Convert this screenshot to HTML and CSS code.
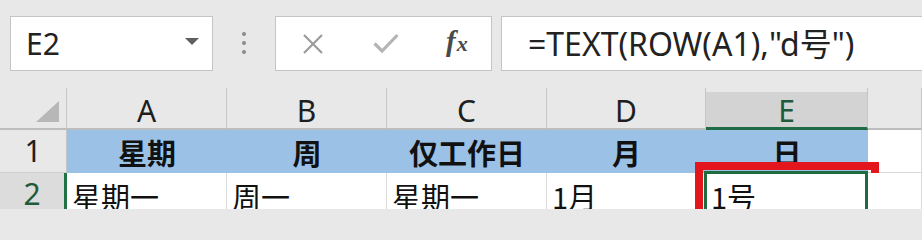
FILE: index.html
```html
<!DOCTYPE html>
<html lang="zh-CN">
<head>
<meta charset="utf-8">
<title>Excel</title>
<link rel="stylesheet" href="styles.css">
</head>
<body>
<div class="app">
  <div class="toolbar">
    <div class="namebox">
      <span class="name">E2</span>
      <svg class="dd" width="14" height="8" viewBox="0 0 14 8"><polygon points="0,0 14,0 7,7" fill="#5f5f5f"/></svg>
    </div>
    <div class="grip"><i></i><i></i><i></i></div>
    <div class="fxbtns">
      <svg class="btn-x" width="22" height="20" viewBox="0 0 22 20"><path d="M2 1 L20 19 M20 1 L2 19" stroke="#9c9c9c" stroke-width="2.2" fill="none"/></svg>
      <svg class="btn-ok" width="26" height="20" viewBox="0 0 26 20"><path d="M1.5 10.5 L9 18 L24.5 2" stroke="#b4b4b4" stroke-width="3.2" fill="none"/></svg>
      <span class="fx">f<span class="fx-x">x</span></span>
    </div>
    <div class="formula">=TEXT(ROW(A1),"d号")</div>
  </div>
  <div class="sheet">
    <div class="corner"><svg width="24" height="22" viewBox="0 0 24 22"><polygon points="23,0 23,21 0,21" fill="#b7b7b7"/></svg></div>
    <div class="colhdr">A</div>
    <div class="colhdr">B</div>
    <div class="colhdr">C</div>
    <div class="colhdr">D</div>
    <div class="colhdr sel">E</div>
    <div class="colhdr"></div>

    <div class="rowhdr">1</div>
    <div class="cell title">星期</div>
    <div class="cell title">周</div>
    <div class="cell title">仅工作日</div>
    <div class="cell title">月</div>
    <div class="cell title">日</div>
    <div class="cell blank"></div>

    <div class="rowhdr sel">2</div>
    <div class="cell data">星期一</div>
    <div class="cell data">周一</div>
    <div class="cell data">星期一</div>
    <div class="cell data">1月</div>
    <div class="cell data active">1号<span class="selbox"></span><span class="mark"></span></div>
    <div class="cell data"></div>
  </div>
</div>
</body>
</html>
```

FILE: styles.css
```css
* { box-sizing: border-box; }
html, body { margin: 0; padding: 0; background: #e8e8e8; }
.app {
  width: 922px;
  height: 209px;
  overflow: hidden;
  background: #e8e8e8;
  font-family: "Noto Sans", "Noto Sans CJK SC", sans-serif;
  color: #1b1b1b;
}
.toolbar {
  height: 88px;
  padding: 16px 0 0 10px;
  display: flex;
  align-items: flex-start;
}
.namebox {
  width: 203px;
  height: 55px;
  background: #fff;
  border: 1px solid #c4c4c4;
  display: flex;
  align-items: center;
  padding: 0 13px 0 15px;
}
.name {
  flex: 1;
  font-size: 30px;
  line-height: 1;
  color: #222;
}
.dd { display: block; margin-top: -4px; }
.grip {
  width: 62px;
  height: 55px;
  display: flex;
  flex-direction: column;
  align-items: center;
  justify-content: center;
  gap: 5px;
  padding-bottom: 2px;
}
.grip i {
  display: block;
  width: 4px;
  height: 4px;
  border-radius: 50%;
  background: #8a8a8a;
}
.fxbtns {
  width: 217px;
  height: 55px;
  background: #fff;
  border: 1px solid #c4c4c4;
  display: flex;
  align-items: center;
  padding-left: 26px;
}
.btn-x { display: block; margin-right: 49px; }
.btn-ok { display: block; margin-right: 47px; margin-top: -1px; }
.fx {
  font-family: "Liberation Serif", serif;
  font-style: italic;
  font-weight: 700;
  font-size: 29px;
  color: #4a4a4a;
  line-height: 1;
  margin-top: -4px;
}
.fx-x { font-size: 22px; margin-left: 1px; }
.formula {
  margin-left: 9px;
  flex: 1;
  min-width: 0;
  height: 55px;
  background: #fff;
  border: 1px solid #c4c4c4;
  border-right: none;
  padding-left: 26px;
  display: flex;
  align-items: center;
  font-size: 32px;
  line-height: 1;
  color: #222;
  white-space: nowrap;
}

.sheet {
  display: grid;
  grid-template-columns: 67px 160px 160px 160px 159px 162px 1fr;
  grid-template-rows: 42px 43px 43px;
}
.corner {
  border-right: 1px solid #c6c6c6;
  border-bottom: 2px solid #bdbdbd;
  display: flex;
  align-items: flex-end;
  justify-content: flex-end;
  padding: 0 6px 5px 0;
}
.corner svg { display: block; }
.colhdr {
  border-right: 1px solid #c6c6c6;
  border-bottom: 2px solid #bdbdbd;
  display: flex;
  align-items: center;
  justify-content: center;
  padding-top: 6px;
  font-size: 30px;
  line-height: 1;
  color: #1e1e1e;
}
.colhdr.sel {
  background: linear-gradient(#e8e8e8 0 4px, #d3d3d3 4px);
  border-bottom: 3px solid #1f6b43;
  color: #1f5a3a;
}
.rowhdr {
  border-right: 1px solid #c6c6c6;
  border-bottom: 1px solid #d0d0d0;
  display: flex;
  align-items: center;
  justify-content: center;
  font-size: 30px;
  line-height: 1;
  color: #1e1e1e;
}
.rowhdr.sel {
  background: #dcdcdc;
  border-right: 3px solid #217346;
  color: #1f5a3a;
}
.cell {
  position: relative;
  background: #fff;
  border-right: 1px solid #dadada;
  border-bottom: 1px solid #dadada;
  font-family: "Noto Sans CJK SC", "Noto Sans", sans-serif;
  font-size: 29px;
  line-height: 1;
  color: #111;
  display: flex;
  white-space: nowrap;
}
.cell.title {
  background: #9bc2e6;
  border-right: none;
  border-bottom: 1px solid #9bc2e6;
  font-weight: 700;
  align-items: center;
  justify-content: center;
  padding-top: 2px;
}
.cell.data {
  align-items: flex-end;
  padding: 0 0 4px 5px;
}
.selbox {
  position: absolute;
  left: -2px;
  top: -2px;
  right: -1px;
  bottom: -1px;
  border: 3px solid #1e6b40;
}
.mark {
  position: absolute;
  left: -11px;
  top: -11px;
  right: -12px;
  height: 80px;
  border: 8px solid #e3161e;
}
```
